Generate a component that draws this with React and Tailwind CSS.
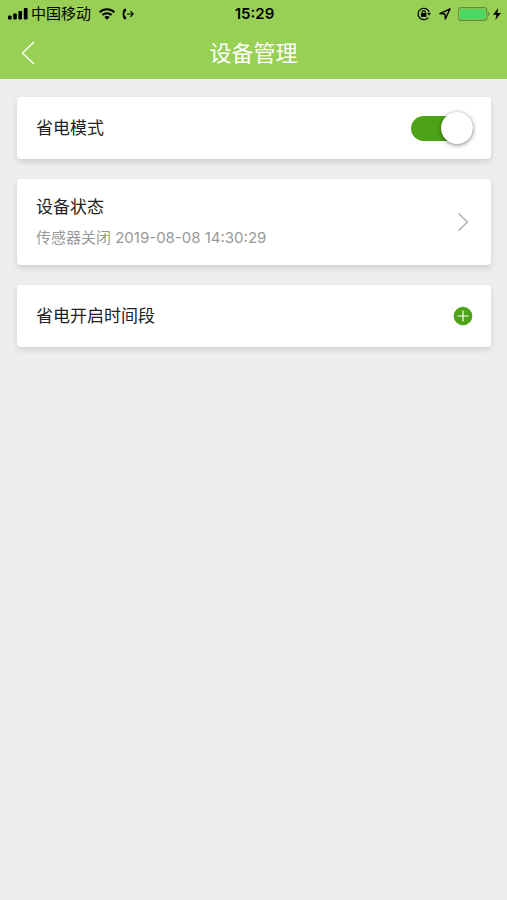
import { useState } from "react";

function StatusBar() {
  return (
    <div className="grid h-7 grid-cols-[1fr_auto_1fr] items-center pr-1.5 pl-2 text-black">
      <div className="flex items-center">
        <svg className="h-3 w-5" viewBox="0 0 20 12" fill="currentColor" aria-hidden="true">
          <rect x="0" y="7.5" width="3.6" height="4" rx="1" />
          <rect x="5.2" y="5.5" width="3.6" height="6" rx="1" />
          <rect x="10.4" y="3" width="3.6" height="8.5" rx="1" />
          <rect x="15.8" y="0" width="3.8" height="11.5" rx="1" />
        </svg>
        <span className="ml-[3px] text-[15px] leading-5 whitespace-nowrap">中国移动</span>
        <svg className="ml-2 h-3 w-4" viewBox="0 0 16 12" fill="none" stroke="currentColor" strokeWidth="2.1" aria-hidden="true">
          <path d="M0.7 4.2C4.8 0.2 11.2 0.2 15.3 4.2" />
          <path d="M3.4 7.1C6 4.7 10 4.7 12.6 7.1" />
          <path d="M5.3 9C6.8 7.6 9.2 7.6 10.7 9L8 11.8Z" fill="currentColor" stroke="none" />
        </svg>
        <svg className="ml-[7px] h-3 w-3" viewBox="0 0 12 12" fill="none" stroke="currentColor" aria-hidden="true">
          <path d="M3.6 0.4L1.9 1C0.2 4 0.2 8 1.9 11L3.6 11.6L4.4 9.4L2.9 8C2.3 6.7 2.3 5.3 2.9 4L4.4 2.6Z" fill="currentColor" stroke="none" />
          <path d="M4.8 6H11M8.4 3.2L11.2 6L8.4 8.8" strokeWidth="1.1" />
        </svg>
      </div>
      <time className="font-['Inter','Liberation_Sans',sans-serif] text-[15px] leading-5 font-semibold">15:29</time>
      <div className="flex items-center justify-end">
        <svg className="h-3.5 w-3.5" viewBox="0 0 14 14" fill="none" stroke="currentColor" aria-hidden="true">
          <path d="M12.2 5.2A5.7 5.7 0 1 0 11.2 10.6" strokeWidth="1.2" />
          <path d="M10 6H14L12.1 8.6Z" fill="currentColor" stroke="none" />
          <path d="M5.1 6.5V5.2A1.6 1.6 0 0 1 8.3 5.2V6.5" strokeWidth="1.1" />
          <rect x="4" y="6" width="5.4" height="4" rx="0.5" fill="currentColor" stroke="none" />
        </svg>
        <svg className="ml-2 h-3 w-3" viewBox="0 0 12 12" fill="none" stroke="currentColor" strokeWidth="1.4" strokeLinejoin="round" aria-hidden="true">
          <path d="M11 1L0.9 5.6L5.9 6L6.3 11Z" />
        </svg>
        <svg className="ml-[7px] h-3.5 w-8" viewBox="0 0 32 14" fill="none" aria-hidden="true">
          <rect x="0.6" y="0.6" width="28.3" height="12.8" rx="2.8" stroke="#628c3c" strokeWidth="1.1" />
          <rect x="2" y="2" width="25.5" height="10" rx="1.5" fill="#4bd964" />
          <path d="M30 5C32 5.2 32 8.8 30 9Z" fill="#628c3c" />
        </svg>
        <svg className="ml-[3px] h-3 w-2" viewBox="0 0 8 12" fill="currentColor" aria-hidden="true">
          <path d="M5.2 0L0 6.7H3.4L2.4 12L8 4.9H4.4Z" />
        </svg>
      </div>
    </div>
  );
}

function Card({ children }) {
  return (
    <section className="flex min-h-[62px] items-center justify-between rounded-sm bg-white pr-[18px] pl-[19px] shadow-[0_3px_6px_rgba(0,0,0,0.13)]">
      {children}
    </section>
  );
}

export default function App() {
  const [saving, setSaving] = useState(true);

  return (
    <div className="min-h-screen bg-[#eeeeee] font-['Inter','Noto_Sans_CJK_SC',sans-serif] text-[#222222]">
      <header className="bg-[#97d054] pb-px">
        <StatusBar />
        <div className="grid h-[50px] grid-cols-[1fr_auto_1fr] items-center px-5 text-white">
          <button type="button" aria-label="返回" className="flex h-8 w-8 items-center">
            <svg className="h-6 w-4" viewBox="0 0 16 24" fill="none" stroke="currentColor" strokeWidth="1.5" aria-hidden="true">
              <path d="M14 1L2.5 12L14 23" />
            </svg>
          </button>
          <h1 className="text-[22px] leading-8 font-normal">设备管理</h1>
        </div>
      </header>

      <main className="flex flex-col gap-5 py-[18px] pr-4 pl-[17px]">
        <Card>
          <label htmlFor="power-saving" className="text-[17px] leading-6">省电模式</label>
          <span className="relative flex h-8 w-[62px] items-center">
            <input
              id="power-saving"
              type="checkbox"
              role="switch"
              checked={saving}
              onChange={(e) => setSaving(e.target.checked)}
              className="peer h-[25px] w-full cursor-pointer appearance-none rounded-full bg-[#c8c8c8] checked:bg-[#4da316]"
            />
            <span className="pointer-events-none absolute left-0 h-8 w-8 rounded-full bg-white shadow-[0_1px_4px_rgba(0,0,0,0.5)] peer-checked:right-0 peer-checked:left-auto" />
          </span>
        </Card>

        <Card>
          <div className="py-4">
            <h2 className="text-[17px] leading-6 font-normal">设备状态</h2>
            <p className="mt-2 text-[15px] leading-[22px] text-[#999999]">传感器关闭 2019-08-08 14:30:29</p>
          </div>
          <button type="button" aria-label="查看设备状态" className="flex h-8 w-5 items-center justify-center text-[#aaaaaa]">
            <svg className="h-5 w-3" viewBox="0 0 12 20" fill="none" stroke="currentColor" strokeWidth="1.3" aria-hidden="true">
              <path d="M1.5 1.5L10.5 10L1.5 18.5" />
            </svg>
          </button>
        </Card>

        <Card>
          <h2 className="text-[17px] leading-6 font-normal">省电开启时间段</h2>
          <button type="button" aria-label="添加时间段" className="flex h-8 w-5 items-center justify-center">
            <svg className="h-5 w-5" viewBox="0 0 20 20" fill="none" aria-hidden="true">
              <circle cx="10" cy="10" r="9.3" fill="#4da316" />
              <path d="M10 4.5V15.5M4.5 10H15.5" stroke="white" strokeWidth="1.2" />
            </svg>
          </button>
        </Card>
      </main>
    </div>
  );
}
